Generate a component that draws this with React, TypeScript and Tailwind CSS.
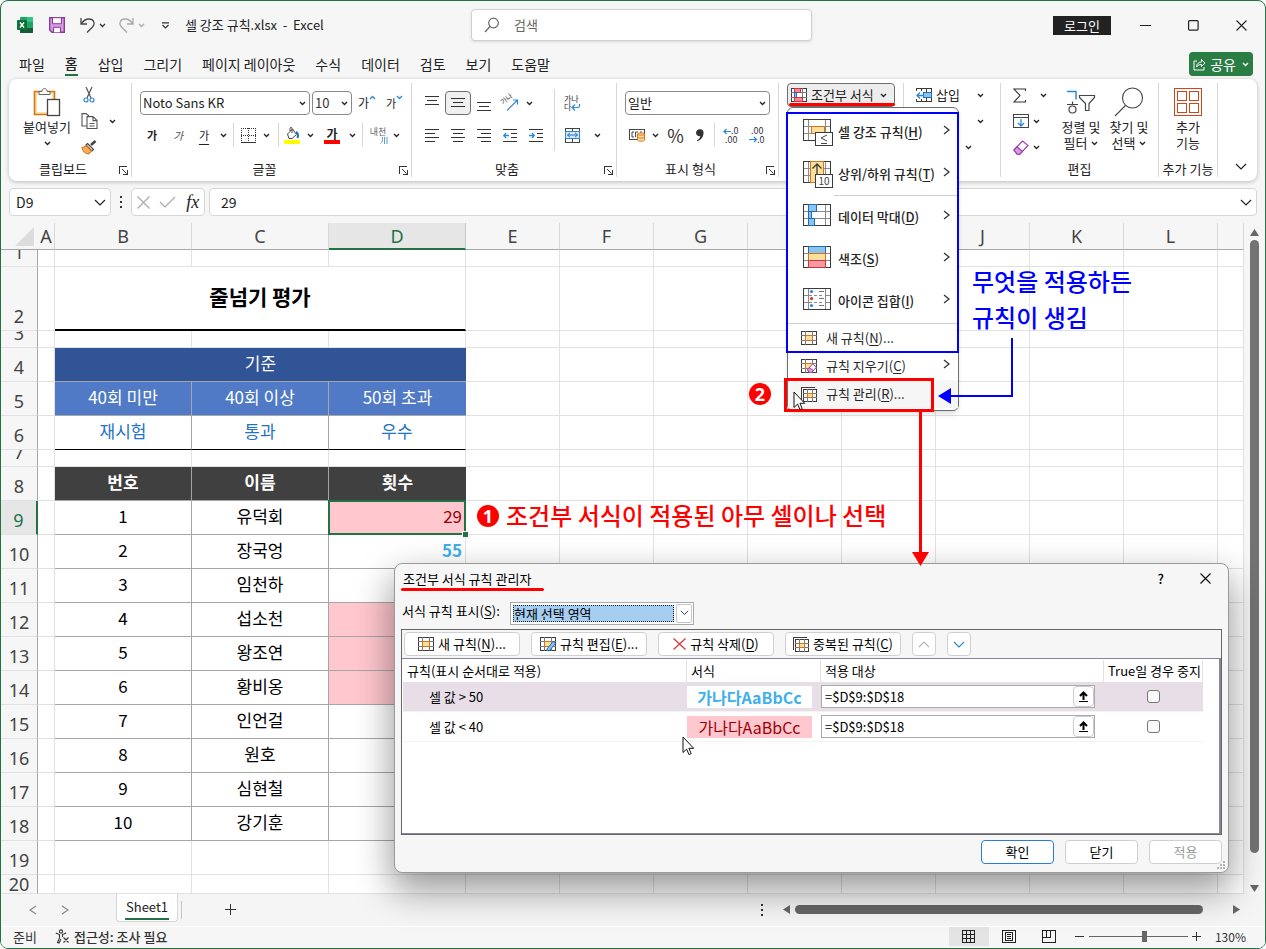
import type { ReactNode } from "react";

const COLUMNS = ["A", "B", "C", "D", "E", "F", "G", "H", "I", "J", "K", "L", ""];

const STUDENTS = [
  { row: 9, name: "유덕회", fill: "bg-[#ffc7ce]" },
  { row: 10, name: "장국엉", fill: "" },
  { row: 11, name: "임천하", fill: "" },
  { row: 12, name: "섭소천", fill: "bg-[#ffc7ce]" },
  { row: 13, name: "왕조연", fill: "bg-[#ffc7ce]" },
  { row: 14, name: "황비옹", fill: "bg-[#ffc7ce]" },
  { row: 15, name: "인언걸", fill: "" },
  { row: 16, name: "원호", fill: "" },
  { row: 17, name: "심현철", fill: "" },
  { row: 18, name: "강기훈", fill: "" },
];

const TABS = ["파일", "홈", "삽입", "그리기", "페이지 레이아웃", "수식", "데이터", "검토", "보기", "도움말"];

function Chevron({ className = "" }: { className?: string }) {
  return (
    <svg className={className} width="7" height="5" viewBox="0 0 7 5" fill="none" stroke="currentColor" strokeWidth="1.3">
      <path d="M1 1l2.5 2.5L6 1" />
    </svg>
  );
}

function BigChevron({ className = "" }: { className?: string }) {
  return (
    <svg className={className} width="12" height="7" viewBox="0 0 12 7" fill="none" stroke="currentColor" strokeWidth="1.2">
      <path d="M1 1l5 5 5-5" />
    </svg>
  );
}

function IconButton({ label, className = "", children }: { label: string; className?: string; children: ReactNode }) {
  return (
    <button aria-label={label} className={`flex h-6 shrink-0 items-center justify-center ${className}`}>
      {children}
    </button>
  );
}

function Separator({ className = "w-2" }: { className?: string }) {
  return (
    <span className={`flex h-6 shrink-0 justify-center ${className}`}>
      <span className="w-px bg-[#d6d6d6]" />
    </span>
  );
}

function Group({
  title,
  className,
  launcher,
  children,
}: {
  title: string;
  className: string;
  launcher?: boolean;
  children: ReactNode;
}) {
  return (
    <section className={`flex h-[94px] shrink-0 flex-col border-r border-[#d6d6d6] ${className}`}>
      <div className="h-[78px]">{children}</div>
      <div className={`relative text-center leading-4 whitespace-nowrap ${launcher ? "pr-3.5" : ""}`}>
        {title}
        {launcher && (
          <button aria-label={`${title} 설정`} className="absolute right-[3px] bottom-0.5">
            <svg width="9" height="9" viewBox="0 0 9 9" fill="none" stroke="#333">
              <path d="M.5 8V.5H8M8.500 3.500v5h-5" shapeRendering="crispEdges" />
              <path d="M3 3l4.500 4.500" />
            </svg>
          </button>
        )}
      </div>
    </section>
  );
}

/* Small table glyph shared by the rule buttons */
function GridIcon({ children, w = 16, h = 14 }: { children?: ReactNode; w?: number; h?: number }) {
  return (
    <svg width={w} height={h} viewBox="0 0 16 14" fill="none" stroke="#3b3b3b" shapeRendering="crispEdges">
      <rect x=".5" y=".5" width="15" height="13" fill="#fff" />
      <path d="M4.500 0v14M11.500 0v14M0 4.500h16M0 9.500h16" stroke="#777" />
      <rect x="4.500" y="4.500" width="7" height="5" fill="#fbdf9d" stroke="#d9731a" />
      {children}
    </svg>
  );
}

function CopyGridIcon() {
  return (
    <svg width="16" height="15" viewBox="0 0 16 15" fill="none" stroke="#3b3b3b" shapeRendering="crispEdges">
      <path d="M.5 13V.5H14" />
      <rect x="2.500" y="2.500" width="13" height="12" fill="#fff" />
      <path d="M6.500 2v13M11.500 2v13M2 6.500h14M2 10.500h14" stroke="#777" />
      <rect x="6.500" y="6.500" width="5" height="4" fill="#fbdf9d" stroke="#d9731a" />
    </svg>
  );
}

function MenuGrid({ children }: { children: ReactNode }) {
  return (
    <svg width="30" height="27" viewBox="0 0 30 27" fill="none" stroke="#3b3b3b" shapeRendering="crispEdges">
      <rect x=".5" y=".5" width="27" height="21" fill="#fff" />
      <path d="M5.500 1v20M22.500 1v20M1 7.500h26M1 14.500h26" stroke="#8a8a8a" />
      {children}
    </svg>
  );
}

function MenuItem({ icon, text, hotkey, dots, big, arrow, hover }: {
  icon: ReactNode;
  text: string;
  hotkey: string;
  dots?: boolean;
  big?: boolean;
  arrow?: boolean;
  hover?: boolean;
}) {
  return (
    <button
      role="menuitem"
      className={`flex w-full items-center text-left text-[#262626] ${
        big ? "h-[42px] pl-[15px] font-medium" : "h-7 pl-[13px]"
      } ${hover ? "bg-[#f6f6f6]" : ""}`}
    >
      <span className={`flex shrink-0 ${big ? "w-[35px]" : "w-[25px]"}`}>{icon}</span>
      <span className="grow whitespace-nowrap">
        {text}(<u className="underline-offset-2">{hotkey}</u>){dots && "..."}
      </span>
      {arrow && (
        <svg className="mr-2 mb-1" width="7" height="10" viewBox="0 0 7 10" fill="none" stroke="#333" strokeWidth="1.3">
          <path d="M1 1l5 4-5 4" />
        </svg>
      )}
    </button>
  );
}

function FormatMenu() {
  return (
    <div role="menu" className="absolute top-6 left-0 z-20 w-[172px] rounded-md border border-[#6e6e6e] bg-white pt-[3px] pb-0.5 shadow-md">
      <MenuItem big arrow text="셀 강조 규칙" hotkey="H" icon={
        <MenuGrid>
          <rect x="8.500" y="7.500" width="13" height="7" fill="#fbdf9d" stroke="#d9731a" />
          <rect x="12.500" y="13.500" width="17" height="13" fill="#fff" />
          <path d="M24 16l-6 3 6 3M18 24.500h6" stroke="#444" shapeRendering="auto" />
        </MenuGrid>
      } />
      <MenuItem big arrow text="상위/하위 규칙" hotkey="T" icon={
        <MenuGrid>
          <rect x="7.500" y=".5" width="13" height="21" fill="#fbdf9d" stroke="#d9731a" />
          <path d="M14 13V3M9.500 7.500L14 3l4.500 4.500" shapeRendering="auto" strokeWidth="1.3" />
          <rect x="12.500" y="13.500" width="17" height="13" fill="#fff" />
          <text x="21" y="24" textAnchor="middle" fontSize="10" fontWeight="400" fill="#444" stroke="none">10</text>
        </MenuGrid>
      } />
      <div className="ml-[46px] h-px bg-[#d0d0d0]" />
      <MenuItem big arrow text="데이터 막대" hotkey="D" icon={
        <MenuGrid>
          <path d="M5.500.5h8v7h-5v7h3v7h-6z" fill="#8cc4f0" stroke="#1f6cb8" />
          <path d="M5 7.500h4M5 14.500h4" stroke="#1f6cb8" />
        </MenuGrid>
      } />
      <MenuItem big arrow text="색조" hotkey="S" icon={
        <MenuGrid>
          <rect x="5.500" y=".5" width="17" height="7" fill="#8cc4f0" stroke="#1f6cb8" />
          <rect x="5.500" y="7.500" width="17" height="7" fill="#fbdf9d" stroke="#d9731a" />
          <rect x="5.500" y="14.500" width="17" height="7" fill="#f79aa6" stroke="#d13438" />
        </MenuGrid>
      } />
      <MenuItem big arrow text="아이콘 집합" hotkey="I" icon={
        <MenuGrid>
          <path d="M6 7.500h16M6 14.500h16" stroke="#fff" />
          <path d="M6 7.500h3M11 7.500h3M16 7.500h3M6 14.500h3M11 14.500h3M16 14.500h3" stroke="#8a8a8a" />
          <path d="M16 3.500h5M16 10.500h5M16 17.500h5" stroke="#777" />
          <g stroke="none" shapeRendering="auto">
            <circle cx="8.500" cy="3.500" r="1.600" fill="#2b88d8" />
            <circle cx="8.500" cy="10.500" r="1.600" fill="#e3262c" />
            <circle cx="8.500" cy="17.500" r="1.600" fill="#2b88d8" />
          </g>
        </MenuGrid>
      } />
      <div className="mt-px h-px bg-[#d0d0d0]" />
      <MenuItem text="새 규칙" hotkey="N" dots icon={<GridIcon />} />
      <MenuItem arrow text="규칙 지우기" hotkey="C" icon={
        <GridIcon>
          <g shapeRendering="auto" stroke="#9b3bab">
            <path d="M6.500 10.500l5-5.500 4 3-5 5.800h-2z" fill="#fff" />
            <path d="M6.500 10.500l1.800-2 4 3-1.800 2.300h-2z" fill="#d79be3" />
          </g>
        </GridIcon>
      } />
      <MenuItem hover text="규칙 관리" hotkey="R" dots icon={<CopyGridIcon />} />
    </div>
  );
}

function TitleBar() {
  return (
    <header className="grid h-12 shrink-0 grid-cols-[470px_minmax(0,341px)_1fr] items-center">
      <div className="flex items-center pl-4">
        <svg width="16" height="16" viewBox="0 0 16 16">
          <rect x="3" width="13" height="16" rx="1" fill="#21a366" />
          <path d="M10 0h5a1 1 0 011 1v4h-6z" fill="#33c481" />
          <path d="M3 5h7v6H3z" fill="#107c41" />
          <path d="M3 11h13v4a1 1 0 01-1 1H4a1 1 0 01-1-1z" fill="#185c37" />
          <path d="M10 5h6v6h-6z" fill="#21a366" />
          <rect y="3" width="10" height="10" rx="1" fill="#0f703b" />
          <path d="M3 5.500l4 5M7 5.500l-4 5" stroke="#fff" strokeWidth="1.400" />
        </svg>
        <IconButton label="저장" className="ml-4 w-4">
          <svg width="16" height="16" viewBox="0 0 16 16" fill="#d79be3" stroke="#8c3a9e">
            <path d="M.7.7h14.600v14.600H3L.7 13z" strokeWidth="1.400" />
            <path d="M3.500.7h9v6h-9zM4.500 15.300v-5h7v5" fill="#fff" />
          </svg>
        </IconButton>
        <IconButton label="실행 취소" className="ml-3.5 w-4">
          <svg width="15" height="16" viewBox="0 0 15 16" fill="none" stroke="#444" strokeWidth="1.300">
            <path d="M1 1v6h6M1 7c2-3 4.500-5 8-5 5 0 6.500 5 3.500 8L7 15.500" />
          </svg>
        </IconButton>
        <Chevron className="ml-1 text-[#333]" />
        <IconButton label="다시 실행" className="ml-3 w-4">
          <svg width="15" height="16" viewBox="0 0 15 16" fill="none" stroke="#a8a8a8" strokeWidth="1.300">
            <path d="M14 1v6H8M14 7c-2-3-4.500-5-8-5C1 2-.5 7 2.500 10L8 15.500" />
          </svg>
        </IconButton>
        <Chevron className="ml-1 text-[#aaa]" />
        <IconButton label="도구 모음 사용자 지정" className="ml-3 w-4">
          <svg width="9" height="7" viewBox="0 0 9 7" fill="none" stroke="#333" strokeWidth="1.200">
            <path d="M1 .8h7M1.500 3l3 3 3-3" />
          </svg>
        </IconButton>
        <span className="ml-3 whitespace-pre">셀 강조 규칙.xlsx  -  Excel</span>
      </div>
      <label className="flex h-8 items-center rounded-sm border border-[#d1d1d1] bg-white shadow-sm">
        <svg className="ml-3 shrink-0" width="16" height="16" viewBox="0 0 16 16" fill="none" stroke="#666" strokeWidth="1.200">
          <circle cx="9.500" cy="6" r="4.800" />
          <path d="M6 9.500L1 15" />
        </svg>
        <input aria-label="검색" placeholder="검색" className="ml-3.5 min-w-0 grow text-[13px] outline-none placeholder:text-[#666]" />
      </label>
      <div className="flex items-center justify-end">
        <button className="h-[19px] bg-[#222] px-[11px] leading-[19px] text-white">로그인</button>
        <IconButton label="최소화" className="ml-5 w-7">
          <svg width="11" height="11" stroke="#222" shapeRendering="crispEdges"><path d="M0 5.500h11" /></svg>
        </IconButton>
        <IconButton label="최대화" className="ml-5 w-7">
          <svg width="11" height="11" fill="none" stroke="#222" strokeWidth="1.200"><rect x=".6" y=".6" width="9.500" height="9.500" rx="1" /></svg>
        </IconButton>
        <IconButton label="닫기" className="mr-2.5 ml-5 w-7">
          <svg width="11" height="11" fill="none" stroke="#222" strokeWidth="1.100"><path d="M.5.5l10 10M10.500.5l-10 10" /></svg>
        </IconButton>
      </div>
    </header>
  );
}

function RibbonTabs() {
  return (
    <nav className="flex h-[30px] shrink-0 items-start justify-between pr-3 pl-[18px]">
      <div className="flex gap-5 pt-[3px] text-sm">
        {TABS.map((tab) => (
          <button
            key={tab}
            className={`h-6 whitespace-nowrap leading-[22px] ${tab === "홈" ? "border-b-2 border-[#217346] font-medium" : ""}`}
          >
            {tab}
          </button>
        ))}
      </div>
      <button className="mt-[3px] flex h-6 items-center rounded bg-[#2a7d43] px-1 text-white">
        <svg width="13" height="13" viewBox="0 0 13 13" fill="none" stroke="#fff">
          <path d="M4 3H1v9h10V9M3.500 9c0-3 2-5 5-5V1.500L12 5 8.500 8.500V6.500C6 6.500 4.500 7.500 3.500 9z" />
        </svg>
        <span className="ml-1 text-sm">공유</span>
        <Chevron className="ml-1.5" />
      </button>
    </nav>
  );
}

const ALIGN_ICONS = [
  { label: "위쪽 맞춤", d: "M0 1.500h14M2 5.500h10M0 9.500h14", on: false },
  { label: "가운데 맞춤", d: "M0 3.500h14M2 7.500h10M0 11.500h14", on: true },
  { label: "아래쪽 맞춤", d: "M0 7.500h14M2 11.500h10M0 15.500h14", on: false },
];

const TEXT_ALIGN_ICONS = [
  { label: "왼쪽 맞춤", d: "M0 1.500h14M0 5.500h10M0 9.500h14M0 13.500h10" },
  { label: "가로 가운데 맞춤", d: "M0 1.500h14M2 5.500h10M0 9.500h14M2 13.500h10" },
  { label: "오른쪽 맞춤", d: "M0 1.500h14M4 5.500h10M0 9.500h14M4 13.500h10" },
];

function Ribbon() {
  return (
    <div className="relative z-10 mx-2 flex h-[102px] shrink-0 rounded-lg bg-white py-1 shadow-[0_1px_4px_rgba(0,0,0,0.25)]">
      <Group title="클립보드" launcher className="w-[123px]">
        <div className="flex pl-3.5">
          <button className="flex w-12 flex-col items-center pt-1 whitespace-nowrap">
            <svg width="28" height="30" viewBox="0 0 28 30" fill="none">
              <path d="M1.500 4.500h20v23h-20z" fill="#fbe3a5" stroke="#d9731a" strokeWidth="1.600" />
              <path d="M4 7h15v18H4z" fill="#fff" />
              <path d="M6 7.500V4.500h3c0-4 5-4 5 0h3v3z" fill="#fff" stroke="#666" />
              <rect x="14.500" y="12.500" width="12" height="16" fill="#fff" stroke="#444" strokeWidth="1.300" />
            </svg>
            <span className="mt-0.5 leading-4">붙여넣기</span>
            <Chevron className="mt-1.5" />
          </button>
          <div className="ml-2 flex flex-col gap-0.5">
            <IconButton label="잘라내기" className="w-5">
              <svg width="12" height="16" viewBox="0 0 12 16" fill="none" stroke="#555" strokeWidth="1.200">
                <path d="M3 0l5 11M9 0L4 11" />
                <circle cx="3" cy="13" r="2" stroke="#2b88d8" />
                <circle cx="9" cy="13" r="2" stroke="#2b88d8" />
              </svg>
            </IconButton>
            <IconButton label="복사" className="w-5">
              <svg width="17" height="16" viewBox="0 0 17 16" fill="#fff" stroke="#555" strokeWidth="1.100">
                <path d="M6 13H1V.6h4L8 3" />
                <path d="M6 3.600h6l4 4v8H6zM12 3.600v4h4M8.500 10.500h5M8.500 13h5" />
              </svg>
            </IconButton>
            <IconButton label="서식 복사" className="w-5">
              <svg width="16" height="15" viewBox="0 0 16 15" fill="#fff" stroke="#444" strokeWidth="1.100">
                <path d="M14.500 1L10 5" strokeWidth="2.600" />
                <path d="M6.500 3.500l6 6-1.500 1.500-6-6z" />
                <path d="M5 5.500C4 7 2.500 7.500 1 7.500c.5 3 3 6 6.500 6.500 1-1 2-2 3-3z" fill="#f5b25b" stroke="#d9731a" />
              </svg>
            </IconButton>
          </div>
          <Chevron className="ml-2.5 mt-9" />
        </div>
      </Group>

      <Group title="글꼴" launcher className="w-[280px]">
        <div className="flex flex-col gap-2 pt-2">
          <div className="flex items-center pl-2">
            <div className="relative w-[170px]">
              <select aria-label="글꼴 이름" className="h-6 w-full appearance-none rounded border border-[#8a8a8a] bg-white px-0.5">
                <option>Noto Sans KR</option>
              </select>
              <Chevron className="absolute top-2.5 right-1" />
            </div>
            <div className="relative ml-0.5 w-10">
              <select aria-label="글꼴 크기" className="h-6 w-full appearance-none rounded border border-[#8a8a8a] bg-white px-0.5 text-[#333]">
                <option>10</option>
              </select>
              <Chevron className="absolute top-2.5 right-1" />
            </div>
            <button className="ml-1.5 flex text-xs leading-4">
              가<span className="text-[#2b88d8]"><Chevron className="rotate-180" /></span>
            </button>
            <button className="ml-2.5 flex text-[11px] leading-4">
              가<span className="text-[#2b88d8]"><Chevron /></span>
            </button>
          </div>
          <div className="flex items-center pl-[7px] text-[11px]">
            <button className="w-[26px] font-bold">가</button>
            <button className="w-[26px] text-[#555] italic">가</button>
            <button className="w-[26px] underline underline-offset-4">가</button>
            <IconButton label="밑줄 종류" className="w-3"><Chevron /></IconButton>
            <Separator className="w-[9px]" />
            <IconButton label="테두리" className="w-5">
              <svg width="15" height="15" viewBox="0 0 15 15" stroke="#333" shapeRendering="crispEdges">
                <path d="M0 .5h15M.5 0v14M14.500 0v14M7.500 0v14M0 7.500h15" strokeDasharray="1 1" />
                <path d="M0 14.500h15" />
              </svg>
            </IconButton>
            <IconButton label="테두리 종류" className="w-4"><Chevron /></IconButton>
            <Separator />
            <IconButton label="채우기 색" className="w-5">
              <svg width="16" height="17" viewBox="0 0 16 17" fill="none" stroke="#444">
                <path d="M3.500 7l5-5 4 5.500L8 11.500H5z" fill="#fff" />
                <path d="M6 4V1.500c0-1.500 2-1.500 2 0V6" />
                <path d="M12 5c2 1 2.500 3 1.500 6" stroke="#1f6cb8" strokeWidth="2" />
                <path d="M0 15h16" stroke="#ff0" strokeWidth="4" />
              </svg>
            </IconButton>
            <IconButton label="채우기 색 선택" className="w-4"><Chevron /></IconButton>
            <button className="flex w-7 flex-col items-center text-xs font-bold leading-[13px]">
              가
              <span className="h-1 w-4 bg-[#f00]" />
            </button>
            <IconButton label="글꼴 색 선택" className="w-3"><Chevron /></IconButton>
            <Separator />
            <button className="flex w-6 flex-col items-center text-[9px] leading-[10px] text-[#666]">
              내천
              <svg className="mr-0.5 self-end" width="8" height="7" fill="none" stroke="#5a9fd4"><path d="M2.500 0c0 4 0 5-2 6.500M4.500 0v7M7 0v7" /></svg>
            </button>
            <IconButton label="윗주 선택" className="w-3"><Chevron /></IconButton>
          </div>
        </div>
      </Group>

      <Group title="맞춤" launcher className="w-[205px]">
        <div className="flex">
          <div className="flex w-[138px] flex-col gap-2 pt-2 pl-[7px]">
            <div className="flex">
              {ALIGN_ICONS.map((a) => (
                <IconButton key={a.label} label={a.label} className={`w-[26px] ${a.on ? "rounded border border-[#6e6e6e] bg-[#f0f0f0]" : ""}`}>
                  <svg width="14" height="16" stroke="#333" shapeRendering="crispEdges"><path d={a.d} /></svg>
                </IconButton>
              ))}
              <IconButton label="방향" className="w-[26px]">
                <svg className="overflow-visible" width="16" height="15" viewBox="0 0 16 15" fill="none" stroke="#2b88d8" strokeWidth="1.200">
                  <text x="1" y="9" fontSize="7" fill="#333" stroke="none" transform="rotate(-38 1 9)">가나</text>
                  <path d="M5 14.500L15.500 4M11 4h4.500v4.500" />
                </svg>
              </IconButton>
              <IconButton label="방향 선택" className="w-3"><Chevron /></IconButton>
            </div>
            <div className="flex">
              {TEXT_ALIGN_ICONS.map((a) => (
                <IconButton key={a.label} label={a.label} className="w-[26px]">
                  <svg width="14" height="15" stroke="#333" shapeRendering="crispEdges"><path d={a.d} /></svg>
                </IconButton>
              ))}
              <IconButton label="내어쓰기" className="w-[26px]">
                <svg width="14" height="15" fill="none" stroke="#333">
                  <path d="M0 1.500h14M8 5.500h6M8 9.500h6M0 13.500h14" shapeRendering="crispEdges" />
                  <path d="M6 7.500H1M3 5L.8 7.500 3 10" stroke="#2b88d8" strokeWidth="1.300" />
                </svg>
              </IconButton>
              <IconButton label="들여쓰기" className="w-[26px]">
                <svg width="14" height="15" fill="none" stroke="#333">
                  <path d="M0 1.500h14M8 5.500h6M8 9.500h6M0 13.500h14" shapeRendering="crispEdges" />
                  <path d="M0 7.500h5M3 5l2.200 2.500L3 10" stroke="#2b88d8" strokeWidth="1.300" />
                </svg>
              </IconButton>
            </div>
          </div>
          <div className="mt-1.5 ml-1 h-[62px] w-px bg-[#d6d6d6]" />
          <div className="flex flex-col gap-2 pt-2 pl-1">
            <IconButton label="텍스트 줄 바꿈" className="w-[26px]">
              <svg className="overflow-visible" width="17" height="16" viewBox="0 0 17 16" fill="none" stroke="#2b88d8">
                <text x="0" y="7" fontSize="8" fill="#333" stroke="none">가나</text>
                <text x="0" y="15" fontSize="8" fill="#333" stroke="none">다</text>
                <path d="M15.500 9v2c0 1-1 1.500-2 1.500H8.500M11 9.500l-3 3 3 3" strokeWidth="1.200" />
              </svg>
            </IconButton>
            <div className="flex">
              <IconButton label="병합하고 가운데 맞춤" className="w-[26px]">
                <svg width="15" height="15" viewBox="0 0 15 15" fill="none" stroke="#444">
                  <path d="M.5.5h14v14H.5zM7.500 0v4M7.500 11v4" shapeRendering="crispEdges" />
                  <path d="M.5 3.500h14v7H.5z" fill="#d6ebfa" stroke="#2b88d8" shapeRendering="crispEdges" />
                  <path d="M2.500 7h10M5 4.800L2.500 7 5 9.200M10 4.800L12.500 7 10 9.200" stroke="#1f6cb8" />
                </svg>
              </IconButton>
              <IconButton label="병합 선택" className="w-6"><Chevron /></IconButton>
            </div>
          </div>
        </div>
      </Group>

      <Group title="표시 형식" launcher className="w-[162px]">
        <div className="flex flex-col gap-2 px-2 pt-2">
          <div className="relative">
            <select aria-label="표시 형식" className="h-6 w-full appearance-none rounded border border-[#8a8a8a] bg-white px-0.5">
              <option>일반</option>
            </select>
            <Chevron className="absolute top-2.5 right-1" />
          </div>
          <div className="flex">
            <IconButton label="회계 표시 형식" className="w-6">
              <svg width="17" height="14" viewBox="0 0 17 14" fill="none" stroke="#444">
                <rect x=".5" y="1.500" width="15" height="10" />
                <path d="M5 4H3v5h2M6.500 9V4H9M11 4h2" />
                <path d="M8.500 6c0-1.500 7-1.500 7 0v6c0 1.500-7 1.500-7 0z" fill="#fbdf9d" stroke="#d9731a" />
                <path d="M8.500 6c0 1.500 7 1.500 7 0M8.500 9c0 1.500 7 1.500 7 0" stroke="#d9731a" />
              </svg>
            </IconButton>
            <IconButton label="통화 선택" className="w-3"><Chevron /></IconButton>
            <button className="w-8 text-lg leading-6 text-[#333]">%</button>
            <IconButton label="쉼표 스타일" className="w-5">
              <svg width="8" height="13" viewBox="0 0 9 14" fill="#333"><path d="M4.500 0a4 4 0 014 4c0 4-2 7.500-7 9.500l-.5-1c2.500-1.300 3.500-2.800 3.800-4.600A4 4 0 114.500 0z" /></svg>
            </IconButton>
            <Separator />
            <IconButton label="자릿수 늘림" className="w-[26px]">
              <svg className="overflow-visible" width="17" height="17" viewBox="0 0 17 17" fill="none" stroke="#2b88d8">
                <text x="8" y="7" fontSize="9" fill="#333" stroke="none">.0</text>
                <text x="2" y="16" fontSize="9" fill="#333" stroke="none">.00</text>
                <path d="M8 4.500H1M3.500 2L1 4.500 3.500 7" strokeWidth="1.200" />
              </svg>
            </IconButton>
            <IconButton label="자릿수 줄임" className="w-[26px]">
              <svg className="overflow-visible" width="17" height="17" viewBox="0 0 17 17" fill="none" stroke="#2b88d8">
                <text x="2" y="7" fontSize="9" fill="#333" stroke="none">.00</text>
                <text x="8" y="16" fontSize="9" fill="#333" stroke="none">.0</text>
                <path d="M0 12.500h8M5 10l2.500 2.500L5 15" strokeWidth="1.200" />
              </svg>
            </IconButton>
          </div>
        </div>
      </Group>

      <Group title="" className="w-[125px]">
        <div className="relative mx-2">
          <button aria-haspopup="menu" aria-expanded="true" className="flex h-6 w-full items-center rounded border border-[#6e6e6e] bg-[#ededed] pl-[3px] whitespace-nowrap">
            <svg width="16" height="14" viewBox="0 0 16 14" fill="none" stroke="#3b3b3b" shapeRendering="crispEdges">
              <rect x=".5" y=".5" width="15" height="13" fill="#fff" />
              <path d="M11.500 0v14M3.500 0v14M0 4.500h16M0 9.500h16" stroke="#777" />
              <rect x="3.500" y=".5" width="6" height="4" fill="#f58a97" stroke="#d13438" />
              <rect x="3.500" y="4.500" width="2" height="5" fill="#8cc4f0" stroke="#1f6cb8" />
              <rect x="3.500" y="9.500" width="8" height="4" fill="#f58a97" stroke="#d13438" />
            </svg>
            <span className="ml-1">조건부 서식</span>
            <Chevron className="ml-1.5" />
          </button>
          <FormatMenu />
        </div>
      </Group>

      <Group title="" className="w-[97px]">
        <div className="flex flex-col gap-0.5">
          <button className="flex h-6 items-center pl-3">
            <svg width="16" height="14" viewBox="0 0 16 14" fill="none" stroke="#3b3b3b" shapeRendering="crispEdges">
              <rect x=".5" y=".5" width="15" height="13" fill="#fff" />
              <path d="M5.500 0v14M10.500 0v14M0 4.500h16M0 9.500h16" />
              <rect x="7.500" y="4.500" width="8" height="5" fill="#8cc4f0" stroke="#1f6cb8" />
              <rect x="0" y="3" width="7" height="8" fill="#fff" stroke="none" />
              <path d="M8 7.500H1M4 4.500l-3 3 3 3" stroke="#2b88d8" strokeWidth="1.300" shapeRendering="auto" />
            </svg>
            <span className="ml-1">삽입</span>
            <Chevron className="ml-[17px]" />
          </button>
          <IconButton label="삭제" className="ml-1 w-[76px] self-start"><Chevron className="ml-auto" /></IconButton>
          <IconButton label="서식" className="ml-1 w-16 self-start"><Chevron className="ml-auto" /></IconButton>
        </div>
      </Group>

      <Group title="편집" className="w-[158px]">
        <div className="flex pl-2">
          <div className="flex w-12 flex-col gap-0.5">
            <button aria-label="자동 합계" className="flex h-6 items-center pl-1">
              <svg width="14" height="15" viewBox="0 0 14 15" fill="none" stroke="#333" strokeWidth="1.100">
                <path d="M12.500 3V1H1l6 6.500L1 14h11.500v-2" />
              </svg>
              <Chevron className="ml-[13px]" />
            </button>
            <button aria-label="채우기" className="flex h-6 items-center pl-1">
              <svg width="16" height="14" viewBox="0 0 16 14" fill="none" stroke="#444">
                <path d="M.5.5h15v13H.5zM.5 3.500h15" shapeRendering="crispEdges" />
                <path d="M8 5v7M5 9l3 3 3-3" stroke="#2b88d8" strokeWidth="1.300" />
              </svg>
              <Chevron className="ml-1" />
            </button>
            <button aria-label="지우기" className="flex h-6 items-center pl-1">
              <svg width="16" height="15" viewBox="0 0 16 15" stroke="#9b3bab" strokeWidth="1.100">
                <path d="M1 10L9.500 1 15 5.500 6.500 14.500 4 14z" fill="#fff" />
                <path d="M1 10l3-3.200 5.500 4.700-3 3L4 14z" fill="#d79be3" />
              </svg>
              <Chevron className="ml-1" />
            </button>
          </div>
          <button className="flex w-12 flex-col items-center pt-1 whitespace-nowrap">
            <svg width="30" height="30" viewBox="0 0 30 30" fill="none" stroke="#444" strokeWidth="1.200">
              <path d="M1 4.500h9v8" stroke="#2b88d8" strokeWidth="1.500" />
              <path d="M6.500 14.500v3M1 17.500h11" />
              <circle cx="6.500" cy="22.500" r="3.500" />
              <path d="M13.500 8.500h15v2l-5.500 6v7h-3.500v-7l-6-6z" />
            </svg>
            <span className="mt-0.5 leading-4">정렬 및</span>
            <span className="flex items-center leading-4">필터 <Chevron className="ml-1" /></span>
          </button>
          <button className="flex w-12 flex-col items-center pt-1 whitespace-nowrap">
            <svg width="30" height="30" viewBox="0 0 30 30" fill="none" stroke="#444" strokeWidth="1.100">
              <circle cx="18.500" cy="11" r="10" />
              <path d="M11.500 18.500L1 29" />
            </svg>
            <span className="mt-0.5 leading-4">찾기 및</span>
            <span className="flex items-center leading-4">선택 <Chevron className="ml-1" /></span>
          </button>
        </div>
      </Group>

      <Group title="추가 기능" className="w-[59px]">
        <button className="flex w-full flex-col items-center pt-1">
          <svg width="30" height="30" viewBox="0 0 30 30" fill="none" stroke="#d0451b" shapeRendering="crispEdges">
            <path d="M1.500 1.500h27v27h-27zM4.500 4.500h9v9h-9zM16.500 4.500h9v9h-9zM4.500 16.500h9v9h-9zM16.500 16.500h9v9h-9z" />
          </svg>
          <span className="mt-0.5 leading-4">추가</span>
          <span className="leading-4">기능</span>
        </button>
      </Group>
      <button aria-label="리본 메뉴 축소" className="mt-auto mr-2.5 mb-[7px] ml-auto">
        <BigChevron />
      </button>
    </div>
  );
}

function FormulaBar() {
  return (
    <div className="mx-2 mt-[7px] flex h-7 shrink-0 items-stretch">
      <label className="flex w-[102px] items-center rounded border border-[#d6d6d6] bg-white">
        <input aria-label="이름 상자" defaultValue="D9" className="min-w-0 grow pl-1.5 text-sm outline-none" />
        <BigChevron className="mr-1 shrink-0" />
      </label>
      <svg className="mx-[9px] my-auto" width="2" height="12" fill="#333"><path d="M0 0h2v2H0zM0 5h2v2H0zM0 10h2v2H0z" /></svg>
      <div className="flex w-[74px] items-center justify-around rounded border border-[#d6d6d6] bg-white">
        <button aria-label="취소">
          <svg width="13" height="13" stroke="#aaa" strokeWidth="1.200"><path d="M.5.5l12 12M12.500.5l-12 12" /></svg>
        </button>
        <button aria-label="입력">
          <svg width="17" height="12" fill="none" stroke="#aaa" strokeWidth="1.200"><path d="M1 6l5 5L16 1" /></svg>
        </button>
        <button className="font-['Liberation_Serif',serif] text-lg leading-none font-medium text-[#222] italic">fx</button>
      </div>
      <label className="ml-1 flex min-w-0 grow items-center rounded border border-[#d6d6d6] bg-white">
        <input aria-label="수식 입력줄" defaultValue="29" className="min-w-0 grow pl-[11px] text-sm outline-none" />
        <BigChevron className="mr-1 shrink-0" />
      </label>
    </div>
  );
}

const GRID = "border-r border-b border-[#e1e1e1]";
const DARK = "border-r border-b border-[#a6a6a6]";

function RowHead({ n, inner = "h-[33px] items-end", active }: { n: number; inner?: string; active?: boolean }) {
  return (
    <th
      scope="row"
      className={`border-b border-b-[#e1e1e1] p-0 font-normal ${
        active ? "border-r-2 border-r-[#217346] bg-[#e6e6e6] text-[#217346]" : "border-r border-r-[#a6a6a6] bg-[#f6f6f6] text-[#444]"
      }`}
    >
      <div className={`flex justify-center overflow-hidden font-['Noto_Sans',sans-serif] text-lg leading-7 ${inner}`}>
        <span className="shrink-0 leading-7">{n}</span>
      </div>
    </th>
  );
}

function Blanks({ count }: { count: number }) {
  return (
    <>
      {Array.from({ length: count }, (_, i) => (
        <td key={i} className={`${GRID} p-0`} />
      ))}
    </>
  );
}

function Sheet() {
  return (
    <table className="w-full table-fixed border-separate border-spacing-0 bg-white text-center text-[17px] leading-none text-black">
      <colgroup>
        <col className="w-[37px]" />
        <col className="w-[17px]" />
        <col className="w-[137px]" />
        <col className="w-[137px]" />
        <col className="w-[137px]" />
        {COLUMNS.slice(4, 12).map((c) => (
          <col key={c} className="w-[94px]" />
        ))}
        <col />
      </colgroup>
      <thead>
        <tr className="h-[27px] bg-[#f6f6f6] font-['Noto_Sans',sans-serif] text-lg leading-6 text-[#444]">
          <th className="border-b border-[#a6a6a6] p-0">
            <svg className="mr-1 ml-auto" width="19" height="19" fill="#dcdcdc"><path d="M19 0v19H0z" /></svg>
          </th>
          {COLUMNS.map((c) => (
            <th
              key={c}
              scope="col"
              className={`border-r p-0 font-normal ${
                c === "D"
                  ? "border-b-2 border-r-[#c6c6c6] border-b-[#217346] bg-[#e6e6e6] text-[#217346]"
                  : "border-b border-r-[#d9d9d9] border-b-[#a6a6a6]"
              }`}
            >
              {c}
            </th>
          ))}
        </tr>
      </thead>
      <tbody>
        <tr className="h-[17px]">
          <RowHead n={1} inner="h-4 items-end" />
          <Blanks count={13} />
        </tr>
        <tr className="h-16">
          <RowHead n={2} inner="h-[63px] items-end" />
          <Blanks count={1} />
          <td colSpan={3} className="border-r border-b-2 border-r-[#e1e1e1] border-b-black p-0 pb-1 text-[21px] font-bold">
            줄넘기 평가
          </td>
          <Blanks count={9} />
        </tr>
        <tr className="h-[17px]">
          <RowHead n={3} inner="h-4 items-end" />
          <Blanks count={13} />
        </tr>
        <tr className="h-[34px]">
          <RowHead n={4} />
          <Blanks count={1} />
          <td colSpan={3} className="border-b border-[#a6a6a6] bg-[#305496] p-0 pb-1 text-white">기준</td>
          <Blanks count={9} />
        </tr>
        <tr className="h-[34px] text-white">
          <RowHead n={5} />
          <Blanks count={1} />
          <td className={`${DARK} bg-[#507ac6] p-0 pb-1`}>40회 미만</td>
          <td className={`${DARK} bg-[#507ac6] p-0 pb-1`}>40회 이상</td>
          <td className="border-b border-[#a6a6a6] bg-[#507ac6] p-0 pb-1">50회 초과</td>
          <Blanks count={9} />
        </tr>
        <tr className="h-[34px] text-[#1f74c4]">
          <RowHead n={6} />
          <Blanks count={1} />
          <td className="border-r border-b border-r-[#a6a6a6] border-b-black p-0 pb-1">재시험</td>
          <td className="border-r border-b border-r-[#a6a6a6] border-b-black p-0 pb-1">통과</td>
          <td className="border-r border-b border-r-[#e1e1e1] border-b-black p-0 pb-1">우수</td>
          <Blanks count={9} />
        </tr>
        <tr className="h-[17px]">
          <RowHead n={7} inner="h-4 items-end" />
          <Blanks count={13} />
        </tr>
        <tr className="h-[34px] font-bold text-white">
          <RowHead n={8} />
          <Blanks count={1} />
          <td className={`${DARK} bg-[#404040] p-0 pb-1`}>번호</td>
          <td className={`${DARK} bg-[#404040] p-0 pb-1`}>이름</td>
          <td className="border-b border-[#a6a6a6] bg-[#404040] p-0 pb-1">횟수</td>
          <Blanks count={9} />
        </tr>
        {STUDENTS.map((s, i) => (
          <tr key={s.row} className="h-[34px]">
            <RowHead n={s.row} active={s.row === 9} />
            <Blanks count={1} />
            <td className={`${DARK} p-0 pb-1`}>{i + 1}</td>
            <td className={`${DARK} p-0 pb-1`}>{s.name}</td>
            <td className={`relative border-r border-b border-r-[#e1e1e1] border-b-[#a6a6a6] p-0 pr-[3px] pb-1 text-right ${s.fill}`}>
              {i === 0 && (
                <>
                  <span className="text-[#9c0006]">29</span>
                  <span className="absolute -inset-px z-10 border-2 border-[#217346]" />
                  <span className="absolute -right-[3px] -bottom-[3px] z-10 size-1.5 border-t border-l border-white bg-[#217346]" />
                </>
              )}
              {i === 1 && <span className="font-bold text-[#3fb0ea]">55</span>}
            </td>
            <Blanks count={9} />
          </tr>
        ))}
        <tr className="h-[34px]">
          <RowHead n={19} />
          <Blanks count={13} />
        </tr>
        <tr className="h-[19px]">
          <RowHead n={20} inner="h-[18px] items-center" />
          <Blanks count={13} />
        </tr>
      </tbody>
    </table>
  );
}

function BottomBars() {
  return (
    <footer className="shrink-0 bg-[#f5f5f5]">
      <div className="flex h-8 items-center pb-px text-[#888]">
        <button aria-label="이전 시트" className="ml-7">
          <svg width="8" height="10" fill="none" stroke="currentColor" strokeWidth="1.200"><path d="M7 1L1 5l6 4" /></svg>
        </button>
        <button aria-label="다음 시트" className="ml-6">
          <svg width="8" height="10" fill="none" stroke="currentColor" strokeWidth="1.200"><path d="M1 1l6 4-6 4" /></svg>
        </button>
        <button className="ml-[47px] h-7 self-start rounded-b border border-t-0 border-[#d6d6d6] bg-white px-2 text-[#222]">
          <span className="block border-b-2 border-[#217346] px-px leading-[22px]">Sheet1</span>
        </button>
        <span className="ml-[3px] h-[18px] w-px bg-[#c6c6c6]" />
        <button aria-label="새 시트" className="ml-[43px]">
          <svg width="11" height="11" stroke="#333" shapeRendering="crispEdges"><path d="M5.500 0v11M0 5.500h11" /></svg>
        </button>
        <svg className="ml-auto" width="2" height="12" fill="#333"><path d="M0 0h2v2H0zM0 5h2v2H0zM0 10h2v2H0z" /></svg>
        <svg className="ml-5" width="7" height="9" fill="#666"><path d="M7 0v9L0 4.500z" /></svg>
        <div className="ml-[5px] h-[9px] w-[408px] rounded-full bg-[#666]" />
        <svg className="mr-[25px] ml-[30px]" width="7" height="9" fill="#666"><path d="M0 0v9l7-4.500z" /></svg>
      </div>
      <div className="flex h-[22px] items-center border-t border-white bg-[#f6f6f6] pb-0.5 pl-3 text-[#333]">
        <span>준비</span>
        <svg className="ml-[18px] shrink-0" width="15" height="15" viewBox="0 0 15 15" fill="none" stroke="#333" strokeWidth="1.100">
          <circle cx="6" cy="2.500" r="1.600" />
          <path d="M.8 4l3.700 1.500V9l-2 4.500 1.500.5L6 10M11.200 4L7.500 5.500V8M8.500 8.500l5 5M13.500 8.500l-5 5" />
        </svg>
        <span className="ml-1 font-medium whitespace-nowrap">접근성: 조사 필요</span>
        <button aria-label="기본 보기" className="ml-auto flex h-[19px] w-10 items-center justify-center bg-[#e4e4e4]">
          <svg width="13" height="13" fill="none" stroke="#222" shapeRendering="crispEdges"><path d="M.5.5h12v12H.5zM4.500 0v13M8.500 0v13M0 4.500h13M0 8.500h13" /></svg>
        </button>
        <button aria-label="페이지 레이아웃 보기" className="flex w-10 justify-center">
          <svg width="14" height="13" fill="none" stroke="#222" shapeRendering="crispEdges"><path d="M.5.5h13v12H.5zM3.500 2.500h7v8h-7zM5 4.500h4M5 6.500h4M5 8.500h4" /></svg>
        </button>
        <button aria-label="페이지 나누기 미리 보기" className="flex w-10 justify-center">
          <svg width="14" height="13" fill="none" stroke="#222" shapeRendering="crispEdges"><path d="M.5.5h13v12H.5zM4.500 0v7M8.500 0v7M0 7.500h9" /></svg>
        </button>
        <button aria-label="축소" className="ml-1.5">
          <svg width="9" height="9" stroke="#333" shapeRendering="crispEdges"><path d="M0 4.500h9" /></svg>
        </button>
        <input
          type="range"
          aria-label="확대/축소"
          defaultValue={56}
          className="ml-[5px] h-px w-[99px] appearance-none bg-[#666] [&::-webkit-slider-thumb]:h-[11px] [&::-webkit-slider-thumb]:w-[5px] [&::-webkit-slider-thumb]:appearance-none [&::-webkit-slider-thumb]:bg-[#666]"
        />
        <button aria-label="확대" className="ml-1">
          <svg width="9" height="9" stroke="#333" shapeRendering="crispEdges"><path d="M0 4.500h9M4.500 0v9" /></svg>
        </button>
        <span className="mr-[19px] ml-3.5 text-xs">130%</span>
      </div>
    </footer>
  );
}

const DIALOG_BUTTON = "flex h-6 w-[116px] items-center justify-center gap-1 rounded border border-[#d0d0d0] bg-white whitespace-nowrap";

const RULES = [
  { rule: "셀 값 > 50", selected: true, sample: "bg-white font-bold text-[#3fb0ea]" },
  { rule: "셀 값 < 40", selected: false, sample: "bg-[#ffc7ce] text-[#9c0006]" },
];

function RulesDialog() {
  return (
    <div
      role="dialog"
      aria-labelledby="rules-title"
      className="absolute top-[562px] left-[393px] z-30 w-[835px] rounded-lg border border-[#9a9a9a] bg-[#f6f6f6] px-1.5 pb-2 text-black shadow-[0_16px_36px_2px_rgba(0,0,0,0.4)]"
    >
      <div className="flex h-[29px] items-center pl-0.5">
        <h2 id="rules-title">조건부 서식 규칙 관리자</h2>
        <button aria-label="도움말" className="ml-auto font-medium">?</button>
        <button aria-label="닫기" className="mr-[11px] ml-9">
          <svg width="11" height="11" fill="none" stroke="#111" strokeWidth="1.200"><path d="M.5.5l10 10M10.500.5l-10 10" /></svg>
        </button>
      </div>
      <div className="flex h-9 items-center pt-2 pb-1">
        <label htmlFor="scope" className="w-[109px] self-start pl-px">
          서식 규칙 표시(<u className="underline-offset-2">S</u>):
        </label>
        <div className="relative h-[23px] w-[184px] border border-[#aaa] bg-white p-0.5">
          <select id="scope" className="block h-[17px] w-[161px] appearance-none border border-dotted border-[#222] bg-[#a6cef0] leading-[13px]">
            <option>현재 선택 영역</option>
          </select>
          <span className="absolute top-px right-px flex h-[19px] w-4 items-center justify-center rounded-xs border border-[#c6c6c6] text-[#444]">
            <svg width="9" height="6" fill="none" stroke="currentColor"><path d="M.8.8l3.700 3.700L8.200.8" /></svg>
          </span>
        </div>
      </div>

      <div className="border border-[#666]">
        <div className="flex h-[29px] gap-[11px] border-b border-[#8a8699] px-0.5 pt-0.5">
          <button className={DIALOG_BUTTON}>
            <GridIcon /> <span>새 규칙(<u className="underline-offset-2">N</u>)...</span>
          </button>
          <button className={DIALOG_BUTTON}>
            <GridIcon>
              <path d="M7 12l6-7.500 2.500 2L9.500 13.500H7z" fill="#8cc4f0" stroke="#1f6cb8" shapeRendering="auto" />
            </GridIcon>
            <span>규칙 편집(<u className="underline-offset-2">E</u>)...</span>
          </button>
          <button className={DIALOG_BUTTON}>
            <svg width="13" height="12" stroke="#e0393e" strokeWidth="1.300"><path d="M.5.5l12 11M12.500.5l-12 11" /></svg>
            <span>규칙 삭제(<u className="underline-offset-2">D</u>)</span>
          </button>
          <button className={DIALOG_BUTTON}>
            <CopyGridIcon /> <span>중복된 규칙(<u className="underline-offset-2">C</u>)</span>
          </button>
          <button aria-label="위로 이동" className="flex size-6 items-center justify-center rounded border border-[#d0d0d0] bg-white text-[#b5b5b5]">
            <BigChevron className="rotate-180" />
          </button>
          <button aria-label="아래로 이동" className="flex size-6 items-center justify-center rounded border border-[#d0d0d0] bg-white text-[#2b88d8]">
            <BigChevron />
          </button>
        </div>
        <div className="h-[175px] border-r-2 border-b border-[#8a8699] bg-white pt-px pl-px">
          <table className="w-[800px] table-fixed border-separate border-spacing-0 text-left">
            <colgroup>
              <col className="w-[284px]" />
              <col className="w-[134px]" />
              <col className="w-[283px]" />
              <col className="w-[99px]" />
            </colgroup>
            <thead>
              <tr className="h-[22px] [&>th]:border-r [&>th]:border-[#e1e1e1] [&>th]:p-0 [&>th]:pl-1 [&>th]:font-normal [&>th]:whitespace-nowrap">
                <th>규칙(표시 순서대로 적용)</th>
                <th>서식</th>
                <th>적용 대상</th>
                <th>True일 경우 중지</th>
              </tr>
            </thead>
            <tbody>
              {RULES.map((r) => (
                <tr key={r.rule} className={`h-[30px] [&>td]:border-b [&>td]:border-[#f3f3f3] [&>td]:p-0 ${r.selected ? "bg-[#e8dee7]" : ""}`}>
                  <td><span className="pl-[26px]">{r.rule}</span></td>
                  <td>
                    <div className={`h-[22px] w-[125px] text-center text-base leading-[22px] ${r.sample}`}>가나다AaBbCc</div>
                  </td>
                  <td>
                    <div className="flex h-[23px] w-[274px] items-center border border-[#aaa] bg-white">
                      <input aria-label={`${r.rule} 적용 대상`} defaultValue="=$D$9:$D$18" className="min-w-0 grow pl-[3px] outline-none" />
                      <button aria-label="범위 선택" className="flex h-[21px] w-[21px] items-center justify-center rounded border border-[#ccc]">
                        <svg width="9" height="11" fill="none" stroke="#000" strokeWidth="2"><path d="M4.500 9V2M1 5l3.500-3.500L8 5" /><path d="M0 10.500h9" strokeWidth="1" /></svg>
                      </button>
                    </div>
                  </td>
                  <td className="text-center">
                    <input type="checkbox" aria-label={`${r.rule} True일 경우 중지`} className="mx-auto block size-[13px] appearance-none rounded-[3px] border border-[#777] bg-[#f9f9f9]" />
                  </td>
                </tr>
              ))}
            </tbody>
          </table>
        </div>
      </div>

      <div className="mt-[5px] flex justify-end gap-[11px]">
        <button className="h-6 w-[73px] rounded border border-[#2b7cd3] bg-white">확인</button>
        <button className="h-6 w-[73px] rounded border border-[#d0d0d0] bg-white">닫기</button>
        <button disabled className="h-6 w-[73px] rounded border border-[#d0d0d0] bg-white text-[#999]">적용</button>
      </div>
      <svg className="absolute right-0.5 bottom-0.5" width="9" height="9" fill="#b5b5b5">
        <path d="M6 0h2v2H6zM3 3h2v2H3zM6 3h2v2H6zM0 6h2v2H0zM3 6h2v2H3zM6 6h2v2H6z" />
      </svg>
    </div>
  );
}

function Step({ n, className }: { n: number; className: string }) {
  return (
    <span className={`absolute flex size-[22px] items-center justify-center rounded-full bg-[#f00] font-['Open_Sans',sans-serif] text-lg leading-none font-bold text-white ${className}`}>
      {n}
    </span>
  );
}

function Pointer({ className }: { className: string }) {
  return (
    <svg className={`absolute ${className}`} width="13" height="20" viewBox="0 0 13 20" fill="#fff" stroke="#111">
      <path d="M1 1v15.500l3.600-3.400 2.400 5.500 2.200-1-2.300-5.300h4.800z" />
    </svg>
  );
}

/* Tutorial marks drawn over the window */
function Annotations() {
  return (
    <div className="pointer-events-none absolute -inset-px z-40 text-2xl font-medium whitespace-nowrap">
      <span className="absolute top-[103px] left-[789px] h-[3px] w-[106px] rounded-full bg-[#f00]" />
      <span className="absolute top-[112px] left-[786px] h-[241px] w-[173px] border-2 border-[#00f]" />
      <span className="absolute top-[378px] left-[784px] h-[34px] w-[150px] border-3 border-[#f00]" />
      <span className="absolute top-[588px] left-[401px] h-[3px] w-[143px] rounded-full bg-[#f00]" />
      <p className="absolute top-[263px] left-[972px] leading-9 text-[#00f]">
        무엇을 적용하든
        <br />
        규칙이 생김
      </p>
      <p className="absolute top-[497px] left-[506px] leading-9 text-[#f00]">조건부 서식이 적용된 아무 셀이나 선택</p>
      <Step n={1} className="top-[505px] left-[477px]" />
      <Step n={2} className="top-[383px] left-[749px]" />
      <svg className="absolute top-[338px] left-[938px]" width="76" height="68" fill="none">
        <path d="M74 0v58H12" stroke="#00f" strokeWidth="2" />
        <path d="M0 58l13-8v16z" fill="#00f" />
      </svg>
      <svg className="absolute top-[411px] left-[912px]" width="18" height="155" fill="#f00">
        <path d="M7 0h3v142H7zM0 141h17l-8.500 14z" />
      </svg>
      <Pointer className="top-[391px] left-[793px]" />
      <Pointer className="top-[736px] left-[682px]" />
    </div>
  );
}

export default function App() {
  return (
    <div className="relative flex min-h-screen w-full flex-col overflow-hidden rounded-lg border border-[#217346] bg-[#f6f6f6] font-['Noto_Sans_CJK_KR','Noto_Sans',sans-serif] text-[13px] leading-5 text-[#222]">
      <TitleBar />
      <RibbonTabs />
      <Ribbon />
      <FormulaBar />
      <main className="mt-[7px] flex grow">
        <div className="min-w-0 grow">
          <Sheet />
        </div>
        <div className="flex w-[21px] shrink-0 flex-col items-center pt-1.5 pb-0.5">
          <svg width="9" height="7" fill="#666"><path d="M4.500 0L9 7H0z" /></svg>
          <div className="mt-1 h-[613px] w-[9px] rounded-full bg-[#737373]" />
          <svg className="mt-auto" width="9" height="7" fill="#666"><path d="M4.500 7L0 0h9z" /></svg>
        </div>
      </main>
      <BottomBars />
      <RulesDialog />
      <Annotations />
    </div>
  );
}
